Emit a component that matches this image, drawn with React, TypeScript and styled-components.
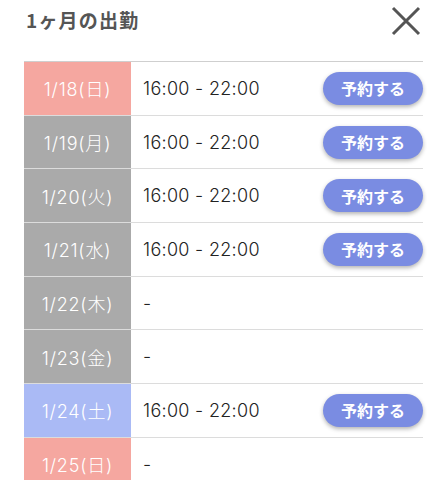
import React from 'react';
import styled, { createGlobalStyle } from 'styled-components';

const GlobalStyle = createGlobalStyle`
    body {
        margin: 0;
        background: #fff;
        font-family: Inter, "Noto Sans CJK JP", sans-serif;
        overflow: hidden;
    }
`
const Page = styled.div`
    width: 445px;
    height: 480px;
    overflow: hidden;
`
const Header = styled.div`
    height: 61px;
    display: flex;
    align-items: flex-start;
    justify-content: space-between;
    padding: 0 24px 0 26px;
    box-sizing: border-box;
`
const Title = styled.h2`
    margin: 6px 0 0;
    font-family: "Noto Sans CJK JP", sans-serif;
    font-size: 19px;
    font-weight: 700;
    color: #555;
    letter-spacing: 1.2px;
`
const CloseButton = styled.button`
    margin-top: 6px;
    width: 30px;
    height: 30px;
    padding: 0;
    border: none;
    background: none;
    display: flex;
    align-items: center;
    justify-content: center;
`
const Table = styled.div`
    margin: 0 22px 0 24px;
    border-top: 1.5px solid #cfcfcf;
`
const Row = styled.div`
    display: flex;
    height: 52.7px;
    border-bottom: 1px solid #dcdcdc;
`
type Kind = 'sun' | 'sat' | 'weekday'
const dateColors: Record<Kind, string> = {
    sun: '#f5a7a0',
    sat: '#aabaf5',
    weekday: '#aaaaaa',
}
const DateCell = styled.div<{ $kind: Kind }>`
    width: 107px;
    flex-shrink: 0;
    background: ${(p) => dateColors[p.$kind]};
    color: #fff;
    font-size: 18px;
    font-weight: 300;
    letter-spacing: 0.8px;
    display: flex;
    align-items: center;
    justify-content: center;
`
const Body = styled.div`
    flex: 1;
    display: flex;
    align-items: center;
    justify-content: space-between;
    padding-left: 12px;
`
const Time = styled.span`
    font-size: 18px;
    font-weight: 300;
    letter-spacing: 0.3px;
    color: #222;
`
const ReserveButton = styled.button`
    width: 100px;
    height: 33px;
    border: none;
    border-radius: 17px;
    background: #7a8ce2;
    color: #fff;
    font-family: "Noto Sans CJK JP", sans-serif;
    font-size: 16px;
    font-weight: 700;
    box-shadow: 0 2px 4px rgba(0, 0, 0, 0.3);
`
const shifts: { date: string; kind: Kind; time?: string }[] = [
    { date: '1/18(日)', kind: 'sun', time: '16:00 - 22:00' },
    { date: '1/19(月)', kind: 'weekday', time: '16:00 - 22:00' },
    { date: '1/20(火)', kind: 'weekday', time: '16:00 - 22:00' },
    { date: '1/21(水)', kind: 'weekday', time: '16:00 - 22:00' },
    { date: '1/22(木)', kind: 'weekday' },
    { date: '1/23(金)', kind: 'weekday' },
    { date: '1/24(土)', kind: 'sat', time: '16:00 - 22:00' },
    { date: '1/25(日)', kind: 'sun' },
]

const App: React.FC = () => {
    return (
        <Page>
            <GlobalStyle />
            <Header>
                <Title>1ヶ月の出勤</Title>
                <CloseButton aria-label="閉じる">
                    <svg width="30" height="30" viewBox="0 0 30 30">
                        <path d="M2 2 L28 28 M28 2 L2 28" stroke="#555" strokeWidth="3" />
                    </svg>
                </CloseButton>
            </Header>
            <Table>
                {shifts.map((s) => (
                    <Row key={s.date}>
                        <DateCell $kind={s.kind}>{s.date}</DateCell>
                        <Body>
                            <Time>{s.time ?? '-'}</Time>
                            {s.time && <ReserveButton>予約する</ReserveButton>}
                        </Body>
                    </Row>
                ))}
            </Table>
        </Page>
    );
};

export default App;
